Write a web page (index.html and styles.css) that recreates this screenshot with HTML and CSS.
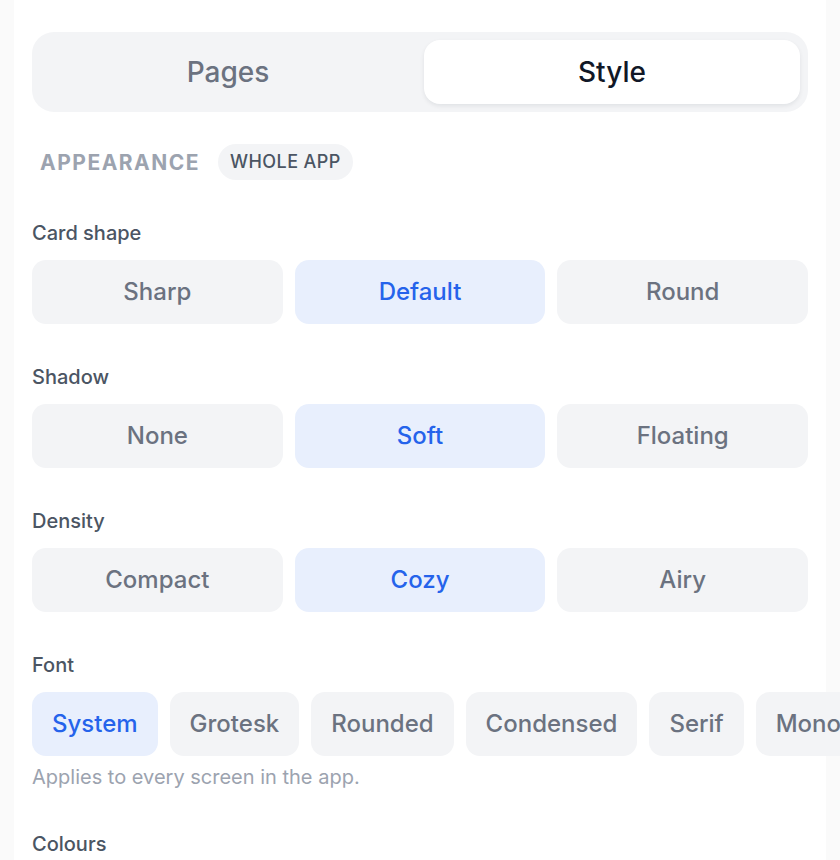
FILE: index.html
```html
<!DOCTYPE html>
<html>
	<head>
		<meta charset="utf-8" />
		<title>Style</title>
		<link rel="stylesheet" href="styles.css">
	</head>

	<body>
		<div class="panel">
			<div class="tabs">
				<div class="tab">Pages</div>
				<div class="tab active">Style</div>
			</div>

			<div class="section-head">
				<span class="section-title">Appearance</span>
				<span class="scope">Whole app</span>
			</div>

			<div class="field">
				<div class="label">Card shape</div>
				<div class="choices">
					<div class="choice">Sharp</div>
					<div class="choice on">Default</div>
					<div class="choice">Round</div>
				</div>
			</div>

			<div class="field">
				<div class="label">Shadow</div>
				<div class="choices">
					<div class="choice">None</div>
					<div class="choice on">Soft</div>
					<div class="choice">Floating</div>
				</div>
			</div>

			<div class="field">
				<div class="label">Density</div>
				<div class="choices">
					<div class="choice">Compact</div>
					<div class="choice on">Cozy</div>
					<div class="choice">Airy</div>
				</div>
			</div>

			<div class="field">
				<div class="label">Font</div>
				<div class="chips">
					<div class="chip on">System</div>
					<div class="chip">Grotesk</div>
					<div class="chip">Rounded</div>
					<div class="chip">Condensed</div>
					<div class="chip">Serif</div>
					<div class="chip">Mono</div>
				</div>
				<div class="hint">Applies to every screen in the app.</div>
			</div>

			<div class="field colours">
				<div class="label">Colours</div>
			</div>
		</div>
	</body>
</html>
```

FILE: styles.css
```css
* {
	padding: 0px;
	margin: 0px;
	box-sizing: border-box;
}
html, body {
	height: 100%;
}
body {
	background-color: #fafafa;
	font-family: Inter, "Liberation Sans", sans-serif;
	color: #4b5563;
	overflow: hidden;
}
.panel {
	margin-left: 14px;
	min-height: 100%;
	background-color: #fff;
	padding: 32px 18px 0px 18px;
	width: 812px;
}

/* tabs */
.tabs {
	display: flex;
	gap: 8px;
	padding: 8px;
	background-color: #f3f4f6;
	border-radius: 22px;
}
.tab {
	flex: 1;
	height: 64px;
	line-height: 64px;
	text-align: center;
	font-size: 28px;
	font-weight: 500;
	color: #6b7280;
	border-radius: 16px;
}
.tab.active {
	background-color: #fff;
	color: #111827;
	box-shadow: 0px 2px 4px rgba(17, 24, 39, 0.08);
}

/* section heading */
.section-head {
	display: flex;
	align-items: center;
	gap: 18px;
	margin-top: 32px;
	padding-left: 8px;
}
.section-title {
	font-size: 21px;
	font-weight: 700;
	letter-spacing: 1.5px;
	text-transform: uppercase;
	color: #9ca3af;
}
.scope {
	height: 36px;
	line-height: 36px;
	padding: 0px 12px;
	border-radius: 18px;
	background-color: #f3f4f6;
	font-size: 18px;
	font-weight: 500;
	letter-spacing: 0.4px;
	text-transform: uppercase;
	color: #4b5563;
}

/* fields */
.field {
	margin-top: 41px;
}
.field.colours {
	margin-top: 43px;
}
.label {
	font-size: 20px;
	line-height: 24px;
	font-weight: 500;
	color: #4b5563;
	margin-bottom: 15px;
}
.choices {
	display: flex;
	gap: 12px;
}
.choice {
	flex: 1;
	height: 64px;
	line-height: 64px;
	text-align: center;
	font-size: 24px;
	font-weight: 500;
	color: #6b7280;
	background-color: #f3f4f6;
	border-radius: 14px;
}
.choice.on,
.chip.on {
	background-color: #e8effd;
	color: #2563eb;
}
.chips {
	display: flex;
	gap: 12px;
	white-space: nowrap;
}
.chip {
	flex: none;
	height: 64px;
	line-height: 64px;
	padding: 0px 20px;
	font-size: 24px;
	font-weight: 500;
	color: #6b7280;
	background-color: #f3f4f6;
	border-radius: 14px;
}
.hint {
	margin-top: 9px;
	font-size: 20px;
	line-height: 24px;
	color: #9ca3af;
}
```
